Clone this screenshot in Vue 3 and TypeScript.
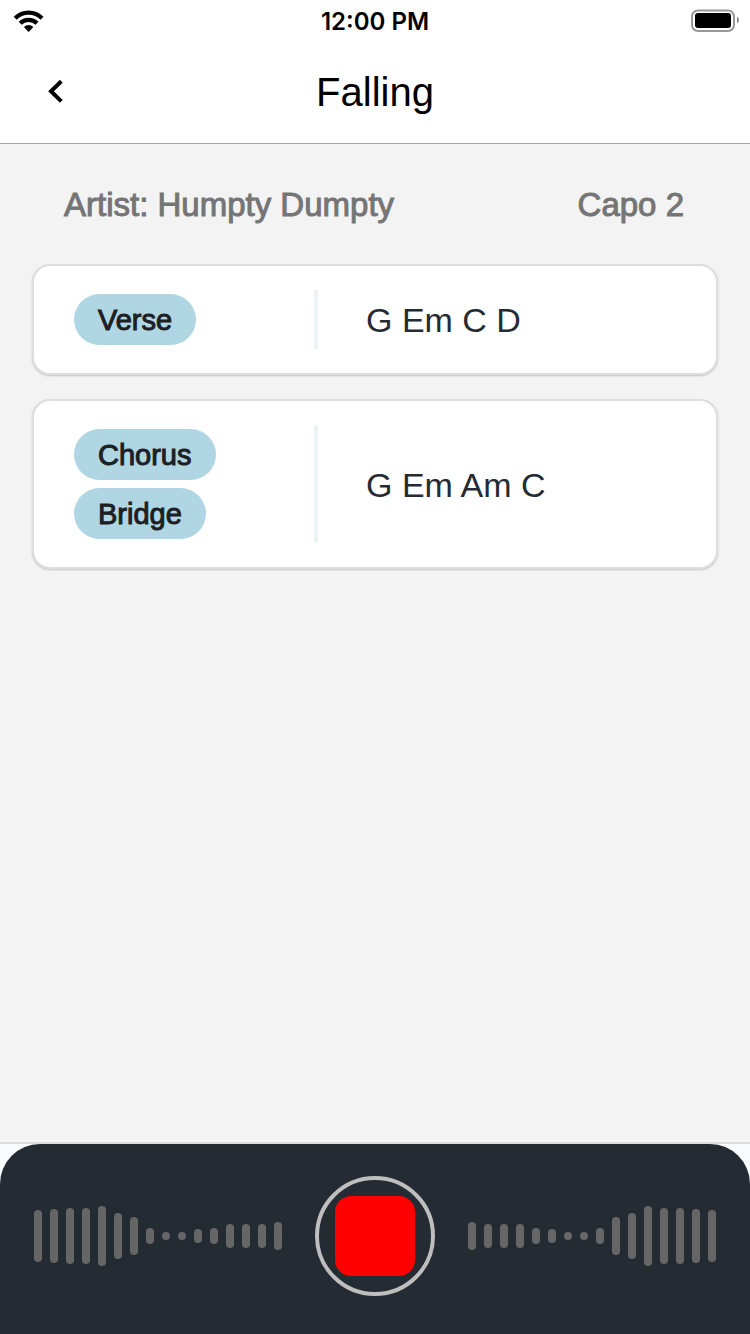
<script setup lang="ts">
interface Part {
  names: string[]
  chords: string
}

const parts: Part[] = [
  { names: ['Verse'], chords: 'G Em C D' },
  { names: ['Chorus', 'Bridge'], chords: 'G Em Am C' },
]

const levels: number[] = [52, 54, 56, 56, 60, 46, 38, 16, 8, 8, 14, 16, 24, 24, 24, 28]
const mirrored: number[] = [...levels].reverse()
</script>

<template>
  <div class="screen">
    <div class="status">
      <svg class="wifi" width="34" height="22" viewBox="-4 0 34 22" role="img" aria-label="Wi-Fi">
        <g fill="none" stroke="#000" stroke-width="4.200">
          <path d="M1.200 8.200A19 19 0 0 1 28 8.200" />
          <path d="M6.200 13.300A12 12 0 0 1 23 13.300" />
        </g>
        <path d="M9.900 17a6.600 6.600 0 0 1 9.400 0L14.600 22z" />
      </svg>
      <span class="time">12:00 PM</span>
      <svg class="battery" width="50" height="24" viewBox="0 0 50 24" role="img" aria-label="Battery full">
        <rect x="2" y="1.500" width="42" height="20.500" rx="6" fill="none" stroke="#999" stroke-width="2" />
        <rect x="5" y="4" width="36" height="15" rx="3" />
        <path d="M47 7.500q2 1.200 2 3.500t-2 3.500z" fill="#888" />
      </svg>
    </div>

    <header class="header">
      <button class="back" type="button" aria-label="Back">
        <svg width="16" height="24" viewBox="0 0 16 24">
          <path d="M13.300 1.200L3 11.300L13.300 21.400" fill="none" stroke="#000" stroke-width="4" />
        </svg>
      </button>
      <h1 class="title">Falling</h1>
    </header>

    <main class="content">
      <div class="info">
        <span>Artist: Humpty Dumpty</span>
        <span>Capo 2</span>
      </div>
      <section v-for="part in parts" :key="part.chords" class="card">
        <div class="chips">
          <span v-for="name in part.names" :key="name" class="chip">{{ name }}</span>
        </div>
        <p class="chords">{{ part.chords }}</p>
      </section>
    </main>

    <footer class="footer">
      <div class="recorder">
        <div class="wave" aria-hidden="true">
          <i v-for="(level, i) in levels" :key="i" class="bar" :style="{ height: level + 'px' }"></i>
        </div>
        <button class="stop" type="button" aria-label="Stop recording">
          <span class="stop-mark"></span>
        </button>
        <div class="wave" aria-hidden="true">
          <i v-for="(level, i) in mirrored" :key="i" class="bar" :style="{ height: level + 'px' }"></i>
        </div>
      </div>
    </footer>
  </div>
</template>

<style>
body {
  margin: 0;
}
</style>

<style scoped>
.screen {
  display: flex;
  flex-direction: column;
  min-height: 100vh;
  background: #f3f3f3;
  font-family: "Liberation Sans", Arial, sans-serif;
}

.status {
  display: grid;
  grid-template-columns: 1fr auto 1fr;
  align-items: center;
  height: 40px;
  padding: 0 10px;
  background: #fff;
}

.time {
  padding-top: 2px;
  font: 600 24px/40px Inter, sans-serif;
}

.battery {
  justify-self: end;
}

.header {
  display: grid;
  grid-template-columns: 1fr auto 1fr;
  align-items: center;
  height: 103px;
  padding: 0 32px;
  background: #fff;
  border-bottom: 1px solid #a7a7aa;
}

.back {
  display: flex;
  justify-self: start;
  padding: 16px;
  border: 0;
  background: none;
}

.title {
  margin: 0;
  font-size: 40px;
  font-weight: 400;
  line-height: 48px;
}

.content {
  flex: 1;
  display: flex;
  flex-direction: column;
  gap: 24px;
  padding: 40px 32px;
}

.info {
  display: flex;
  justify-content: space-between;
  padding: 0 34px 14px 32px;
  color: #757575;
  font-size: 33px;
  line-height: 42px;
  -webkit-text-stroke: 1px #757575;
}

.card {
  display: grid;
  grid-template-columns: 280px 1fr;
  padding: 24px 0;
  border: 2px solid #dedede;
  border-radius: 18px;
  background: #fff;
  box-shadow: 0 1px 2px rgba(0, 0, 0, 0.2);
}

.chips {
  display: flex;
  flex-direction: column;
  align-items: flex-start;
  gap: 8px;
  padding: 4px 0 4px 40px;
}

.chip {
  padding: 2px 24px 0;
  border-radius: 26px;
  background: #afd6e2;
  color: #1c2023;
  font-size: 29px;
  line-height: 49px;
  -webkit-text-stroke: 1px #1c2023;
}

.chords {
  display: flex;
  align-items: center;
  margin: 0;
  padding: 2px 0 0 48px;
  border-left: 4px solid #ebf3f6;
  color: #252b33;
  font-size: 34px;
}

.footer {
  border-top: 2px solid #dcdcde;
  background: #f8fcff;
}

.recorder {
  display: flex;
  align-items: center;
  justify-content: center;
  gap: 33px;
  padding: 32px 0 38px;
  border-radius: 40px 40px 0 0;
  background: #252b33;
}

.wave {
  display: flex;
  align-items: center;
  gap: 8px;
}

.bar {
  width: 8px;
  border-radius: 4px;
  background: #666;
}

.stop {
  display: flex;
  align-items: center;
  justify-content: center;
  width: 120px;
  height: 120px;
  padding: 0;
  border: 4px solid #bebebe;
  border-radius: 50%;
  background: none;
}

.stop-mark {
  width: 80px;
  height: 80px;
  border-radius: 16px;
  background: #f00;
}
</style>
